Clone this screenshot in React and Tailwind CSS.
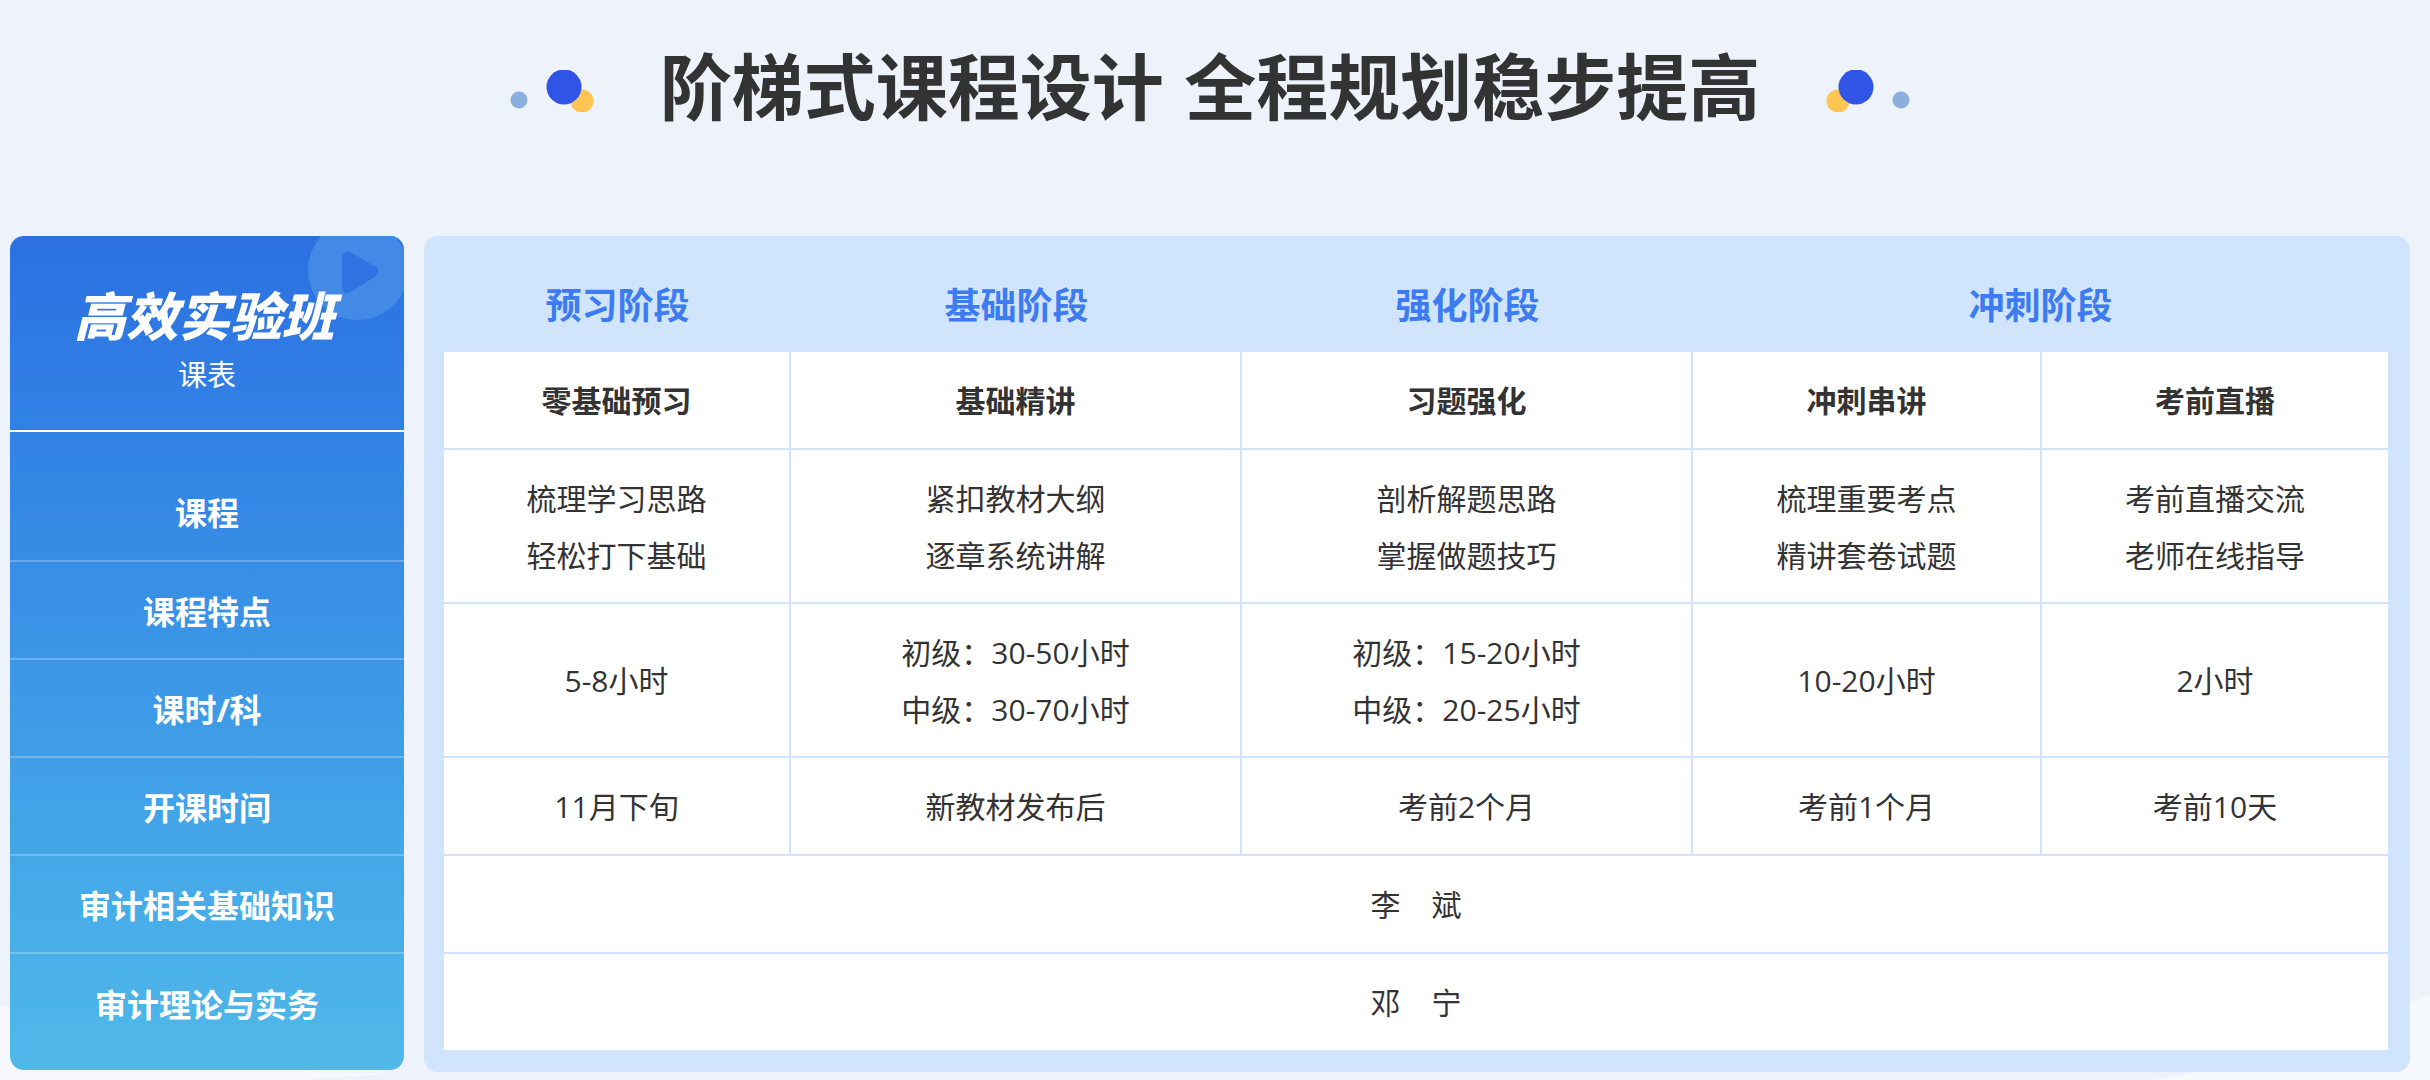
const FONT = "font-['Open_Sans','Noto_Sans_CJK_SC',sans-serif]";

const stages = [
  { label: "预习阶段", cls: "w-[347px]" },
  { label: "基础阶段", cls: "w-[451px]" },
  { label: "强化阶段", cls: "w-[451px]" },
  { label: "冲刺阶段", cls: "flex-1" },
];

const sideRows = ["课程特点", "课时/科", "开课时间", "审计相关基础知识", "审计理论与实务"];

const rows = [
  { h: "h-[98px]", bold: true, cells: [["零基础预习"], ["基础精讲"], ["习题强化"], ["冲刺串讲"], ["考前直播"]] },
  {
    h: "h-[154px]",
    cells: [
      ["梳理学习思路", "轻松打下基础"],
      ["紧扣教材大纲", "逐章系统讲解"],
      ["剖析解题思路", "掌握做题技巧"],
      ["梳理重要考点", "精讲套卷试题"],
      ["考前直播交流", "老师在线指导"],
    ],
  },
  {
    h: "h-[154px]",
    cells: [["5-8小时"], ["初级：30-50小时", "中级：30-70小时"], ["初级：15-20小时", "中级：20-25小时"], ["10-20小时"], ["2小时"]],
  },
  { h: "h-[98px]", cells: [["11月下旬"], ["新教材发布后"], ["考前2个月"], ["考前1个月"], ["考前10天"]] },
];

const widths = ["w-[347px]", "w-[451px]", "w-[451px]", "w-[349px]", "flex-1"];

function Dots({ flip }) {
  return (
    <svg width="85" height="42" viewBox="0 0 85 42" className={flip ? "-scale-x-100" : ""}>
      <circle cx="10" cy="30" r="8.5" fill="#8aaedd" />
      <circle cx="73" cy="31" r="11.5" fill="#ffc552" />
      <circle cx="55" cy="17" r="17.5" fill="#2f54e6" />
    </svg>
  );
}

function Row({ row }) {
  return (
    <div className={`flex ${row.h} border-b-2 border-[#d0e4fc]`}>
      {row.cells.map((lines, i) => (
        <div
          key={i}
          className={`${widths[i]} flex flex-col items-center justify-center gap-[21px] pt-[2px] text-[30px] leading-[36px] text-[#333] ${
            i < 4 ? "border-r-2 border-[#d0e4fc]" : ""
          } ${row.bold ? "font-bold" : ""}`}
        >
          {lines.map((l) => (
            <div key={l}>{l}</div>
          ))}
        </div>
      ))}
    </div>
  );
}

export default function App() {
  return (
    <div className={`relative h-[1080px] w-[2430px] overflow-hidden bg-[#edf2fb] ${FONT}`}>
      <svg className="absolute bottom-0 left-0" width="2430" height="120" viewBox="0 0 2430 120">
        <path d="M0 45 C120 90 300 120 420 112 L300 120 L0 120 Z" fill="#f6f8fd" />
        <path d="M2150 120 C2250 108 2350 60 2430 36 L2430 120 Z" fill="#f7fafd" />
      </svg>

      <div className="relative flex h-[236px] items-start justify-center gap-[66px] pt-[41px] pr-[10px]">
        <div className="pt-[29px]">
          <Dots />
        </div>
        <h1 className="text-[72px] font-bold leading-[90px] text-[#333] [word-spacing:2px]">阶梯式课程设计 全程规划稳步提高</h1>
        <div className="pt-[29px]">
          <Dots flip />
        </div>
      </div>

      <div className="relative flex items-start gap-[20px] pl-[10px]">
        <aside className="h-[834px] w-[394px] overflow-hidden rounded-[14px] bg-gradient-to-b from-[#2c70e2] to-[#50b9e9] text-white">
          <div className="relative flex h-[194px] flex-col items-center pt-[48px] pr-[6px]">
            <svg className="absolute top-0 right-0" width="96" height="88" viewBox="0 0 96 88">
              <circle cx="50" cy="34" r="50" fill="#428ae6" />
              <path d="M34 24 Q34 12 44 17 L68 31 Q73 35.5 68 40 L44 55 Q34 61 34 49 Z" fill="#2f74e2" />
            </svg>
            <div className="relative text-[52px] font-black italic leading-[64px]">高效实验班</div>
            <div className="relative mt-[9px] pl-[6px] text-[29px] leading-[36px]">课表</div>
          </div>
          <div className="h-[2px] bg-white" />
          <div className="flex h-[130px] items-end justify-center border-b-2 border-white/25 pb-[27px] text-[32px] font-bold leading-[40px]">
            课程
          </div>
          {sideRows.map((s, i) => (
            <div
              key={s}
              className={`flex h-[98px] items-center justify-center pt-[3px] text-[32px] font-bold leading-[40px] ${
                i < 4 ? "border-b-2 border-white/25" : ""
              }`}
            >
              {s}
            </div>
          ))}
        </aside>

        <main className="h-[836px] w-[1986px] rounded-[14px] bg-[#d0e4fc] px-[20px]">
          <div className="flex h-[116px] w-[1944px] items-center pt-[24px]">
            {stages.map((s) => (
              <div key={s.label} className={`${s.cls} text-center text-[36px] font-bold leading-[44px] text-[#3d7bf2]`}>
                {s.label}
              </div>
            ))}
          </div>
          <div className="w-[1944px] bg-white">
            {rows.map((r, i) => (
              <Row key={i} row={r} />
            ))}
            <div className="flex h-[98px] items-center justify-center border-b-2 border-[#d0e4fc] text-[30px] text-[#333]">
              李&nbsp;&nbsp;&nbsp;&nbsp;斌
            </div>
            <div className="flex h-[96px] items-center justify-center text-[30px] text-[#333]">
              邓&nbsp;&nbsp;&nbsp;&nbsp;宁
            </div>
          </div>
        </main>
      </div>
    </div>
  );
}
